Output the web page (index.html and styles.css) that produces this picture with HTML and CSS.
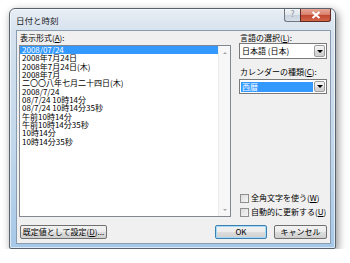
FILE: index.html
```html
<!DOCTYPE html>
<html lang="ja">
<head>
    <meta charset="UTF-8">
    <title>日付と時刻</title>
    <link rel="stylesheet" href="styles.css">
</head>
<body>

    <div class="dialog">
        <div class="titlebar">
            <span class="title">日付と時刻</span>
            <div class="caption-buttons">
                <span class="cap-help">?</span>
                <span class="cap-close">
                    <svg width="10" height="8" viewBox="0 0 10 8">
                        <path d="M1.5,1 L8.5,7 M8.5,1 L1.5,7" stroke="#ffffff" stroke-width="2" />
                    </svg>
                </span>
            </div>
        </div>

        <div class="client">
            <div class="main">
                <!-- 表示形式 -->
                <div class="left">
                    <div class="label">表示形式(<u>A</u>):</div>
                    <div class="listbox">
                        <ul class="items">
                            <li class="selected">2008/07/24</li>
                            <li>2008年7月24日</li>
                            <li>2008年7月24日(木)</li>
                            <li>2008年7月</li>
                            <li>二〇〇八年七月二十四日(木)</li>
                            <li>2008/7/24</li>
                            <li>08/7/24 10時14分</li>
                            <li>08/7/24 10時14分35秒</li>
                            <li>午前10時14分</li>
                            <li>午前10時14分35秒</li>
                            <li>10時14分</li>
                            <li>10時14分35秒</li>
                        </ul>
                        <div class="scrollbar">
                            <span class="arrow-up"></span>
                            <span class="arrow-down"></span>
                        </div>
                    </div>
                </div>

                <!-- 言語とカレンダー -->
                <div class="right">
                    <div class="label">言語の選択(<u>L</u>):</div>
                    <div class="combo">
                        <span class="combo-text">日本語 (日本)</span>
                        <span class="drop"><span class="tri"></span></span>
                    </div>
                    <div class="label label-gap">カレンダーの種類(<u>C</u>):</div>
                    <div class="combo combo-small">
                        <span class="combo-text selected">西暦</span>
                        <span class="drop"><span class="tri"></span></span>
                    </div>

                    <div class="checks">
                        <div class="check"><span class="box"></span><span>全角文字を使う(<u>W</u>)</span></div>
                        <div class="check"><span class="box"></span><span>自動的に更新する(<u>U</u>)</span></div>
                    </div>
                </div>
            </div>

            <div class="buttons">
                <button class="btn btn-wide">既定値として設定(<u>D</u>)...</button>
                <button class="btn btn-default">OK</button>
                <button class="btn">キャンセル</button>
            </div>
        </div>
    </div>

</body>
</html>
```

FILE: styles.css
```css
body {
    margin: 0;
    padding: 0;
    background-color: #ffffff;
    font-family: "Noto Sans CJK JP", sans-serif;
    font-size: 8px;
    color: #000000;
}

/* Vista glass frame */
.dialog {
    margin: 8px 0 0 9px;
    width: 327px;
    height: 241px;
    box-sizing: border-box;
    border: 1px solid #59636e;
    border-radius: 6px 6px 2px 2px;
    background: linear-gradient(to bottom, #e8eef4 0px, #d6e2ee 22px, #c0d6ea 60%, #a6c8e8 100%);
    box-shadow: inset 0 0 0 1px rgba(255, 255, 255, 0.6), 2px 3px 8px rgba(0, 0, 0, 0.45);
    padding: 0 4px 4px 6px;
    display: flex;
    flex-direction: column;
}

.titlebar {
    height: 21px;
    display: flex;
    justify-content: space-between;
    align-items: flex-start;
}

.title {
    font-size: 8.5px;
    line-height: 10px;
    margin-top: 6px;
    color: #1a1a1a;
}

.caption-buttons {
    display: flex;
}

.cap-help {
    width: 16px;
    height: 13px;
    box-sizing: border-box;
    border: 1px solid #6d7782;
    border-top: none;
    border-right: none;
    border-radius: 0 0 0 3px;
    background: linear-gradient(to bottom, #f2f5f8 0%, #dfe5ec 50%, #c8d2dd 51%, #d8e0e8 100%);
    color: #8a939c;
    font-family: "DejaVu Sans", sans-serif;
    font-size: 8px;
    line-height: 12px;
    text-align: center;
}

.cap-close {
    width: 31px;
    height: 13px;
    box-sizing: border-box;
    border: 1px solid #5e2a22;
    border-top: none;
    border-radius: 0 0 3px 0;
    background: linear-gradient(to bottom, #e8a898 0%, #d77d68 50%, #c2452e 51%, #d0654a 100%);
    display: flex;
    align-items: center;
    justify-content: center;
}

/* client area */
.client {
    flex: 1;
    background-color: #f0f0f0;
    border: 1px solid #8a9cb0;
    padding: 2px 3px 4px 2px;
    display: flex;
    flex-direction: column;
}

.main {
    height: 184px;
    display: flex;
    gap: 8px;
}

.label {
    line-height: 10px;
    padding-left: 1px;
    white-space: nowrap;
}

.left {
    width: 212px;
    display: flex;
    flex-direction: column;
}

.left .label {
    margin-bottom: 2px;
}

.listbox {
    flex: 1;
    display: flex;
    background-color: #ffffff;
    border: 1px solid #828790;
}

.items {
    flex: 1;
    list-style: none;
    margin: 0;
    padding: 0;
}

.items li {
    line-height: 8.35px;
    height: 8.35px;
    padding-left: 2px;
    white-space: nowrap;
}

.items li.selected {
    background-color: #3399ff;
    color: #ffffff;
}

.scrollbar {
    width: 11px;
    background-color: #f7f7f7;
    border-left: 1px solid #ececec;
    display: flex;
    flex-direction: column;
    justify-content: space-between;
    align-items: center;
    padding: 6px 0 5px;
}

.arrow-up {
    width: 0;
    height: 0;
    border-left: 2px solid transparent;
    border-right: 2px solid transparent;
    border-bottom: 2px solid #a6a6a6;
}

.arrow-down {
    width: 0;
    height: 0;
    border-left: 2px solid transparent;
    border-right: 2px solid transparent;
    border-top: 2px solid #a6a6a6;
}

.right {
    flex: 1;
    display: flex;
    flex-direction: column;
}

.label-gap {
    margin-top: 8px;
}

.combo {
    height: 16px;
    box-sizing: border-box;
    border: 1px solid #7a7a7a;
    background-color: #ffffff;
    display: flex;
    align-items: center;
    padding: 1px;
}

.combo-small {
    margin-top: 2px;
    height: 15px;
}

.combo-text {
    flex: 1;
    line-height: 10px;
    padding-left: 1px;
    white-space: nowrap;
}

.combo-text.selected {
    background-color: #3399ff;
    color: #ffffff;
    margin-right: 1px;
}

.drop {
    width: 11px;
    height: 100%;
    box-sizing: border-box;
    border: 1px solid #9c9c9c;
    border-radius: 2px;
    background: linear-gradient(to bottom, #f4f4f4 0%, #e8e8e8 50%, #d8d8d8 51%, #cfcfcf 100%);
    display: flex;
    align-items: center;
    justify-content: center;
}

.tri {
    width: 0;
    height: 0;
    border-left: 3px solid transparent;
    border-right: 3px solid transparent;
    border-top: 3px solid #000000;
}

.checks {
    margin-top: auto;
    display: flex;
    flex-direction: column;
    gap: 4px;
}

.check {
    line-height: 10px;
    display: flex;
    align-items: center;
    gap: 2px;
    padding-left: 1px;
    white-space: nowrap;
}

.box {
    width: 9px;
    height: 9px;
    box-sizing: border-box;
    border: 1px solid #8f8f8f;
    background: linear-gradient(135deg, #dcdcdc 0%, #f6f6f6 100%);
}

/* bottom buttons */
.buttons {
    margin-top: 8px;
    display: flex;
    gap: 7px;
}

.btn {
    height: 14px;
    box-sizing: border-box;
    font-family: "Noto Sans CJK JP", sans-serif;
    font-size: 8px;
    line-height: 10px;
    padding: 0;
    width: 53px;
    border: 1px solid #707070;
    border-radius: 2px;
    background: linear-gradient(to bottom, #f2f2f2 0%, #ebebeb 50%, #dddddd 51%, #cfcfcf 100%);
    color: #000000;
    cursor: pointer;
}

.btn-wide {
    width: 87px;
    margin-left: 1px;
    margin-right: auto;
}

.btn-default {
    width: 52px;
    border-color: #3c7fb1;
    box-shadow: inset 0 0 0 1px #a4dcf8;
}
```
